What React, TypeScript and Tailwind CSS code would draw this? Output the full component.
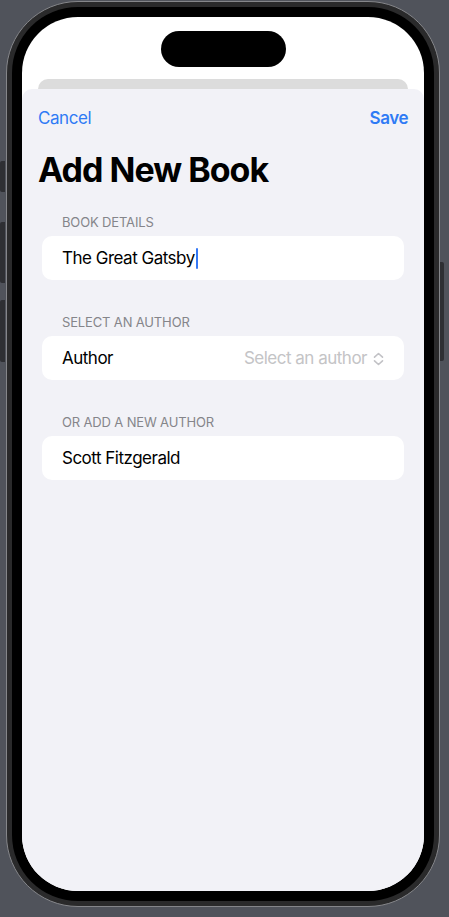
import React from "react";

const font = { fontFamily: "Inter, 'Noto Sans', 'Liberation Sans', sans-serif" };

function Chevrons() {
  return (
    <svg width="11" height="14" viewBox="0 0 11 14" fill="none" className="ml-[6px]">
      <path d="M1.5 5.2 L5.5 1.5 L9.5 5.2" stroke="#c2c2c6" strokeWidth="1.6" strokeLinecap="round" strokeLinejoin="round" />
      <path d="M1.5 8.8 L5.5 12.5 L9.5 8.8" stroke="#c2c2c6" strokeWidth="1.6" strokeLinecap="round" strokeLinejoin="round" />
    </svg>
  );
}

function SectionHeader({ children }: { children: React.ReactNode }) {
  return (
    <div className="px-[40px] h-[16px] text-[13px] leading-[16px] text-[#85858a] tracking-[-0.15px] uppercase">
      {children}
    </div>
  );
}

function Card({ children }: { children: React.ReactNode }) {
  return (
    <div className="mx-[20px] mt-[6px] h-[44px] rounded-[10px] bg-white px-[20px] pt-[1px] flex items-center text-[17px] tracking-[-0.5px] text-black">
      {children}
    </div>
  );
}

export default function App() {
  return (
    <div className="relative w-[449px] h-[917px] bg-[#50535b] overflow-hidden" style={font}>
      {/* side buttons */}
      <div className="absolute left-0 top-[161px] w-[5px] h-[31px] rounded-l-[2px] bg-[#2e2f33]" />
      <div className="absolute left-0 top-[222px] w-[5px] h-[61px] rounded-l-[2px] bg-[#2e2f33]" />
      <div className="absolute left-0 top-[300px] w-[5px] h-[62px] rounded-l-[2px] bg-[#2e2f33]" />
      <div className="absolute left-[440px] top-[262px] w-[4px] h-[99px] rounded-r-[2px] bg-[#2e2f33]" />

      {/* phone frame */}
      <div className="ml-[6px] mt-[1px] w-[434px] h-[906px] rounded-[72px] border border-[#85868a] bg-[#2a2a2b] p-[5px]">
        <div className="w-full h-full rounded-[66px] bg-black p-[10px]">
          <div className="w-[402px] h-[874px] rounded-[56px] bg-white overflow-hidden flex flex-col">
            {/* dynamic island */}
            <div className="mt-[14px] mx-auto w-[125px] h-[36px] rounded-full bg-black" />
            {/* card behind */}
            <div className="mt-[12px] mx-[16px] h-[10px] rounded-t-[10px] bg-[#dcdcdc]" />
            {/* sheet */}
            <div className="flex-1 rounded-t-[10px] bg-[#f2f2f7]">
              <div className="pt-[17px] px-[16px] flex items-center justify-between h-[40px] text-[17px] leading-[22px] tracking-[-0.45px] text-[#2f7bf5]">
                <span>Cancel</span>
                <span className="font-semibold">Save</span>
              </div>
              <h1 className="mt-[20px] px-[16px] text-[34px] leading-[41px] font-bold tracking-[-1px] text-black">
                Add New Book
              </h1>

              <div className="mt-[24px]">
                <SectionHeader>Book Details</SectionHeader>
                <Card>
                  <span>The Great Gatsby</span>
                  <span className="ml-[1px] w-[2px] h-[21px] bg-[#3478f6] rounded-full" />
                </Card>
              </div>

              <div className="mt-[34px]">
                <SectionHeader>Select an Author</SectionHeader>
                <Card>
                  <span className="flex-1">Author</span>
                  <span className="text-[#c4c4c6]">Select an author</span>
                  <Chevrons />
                </Card>
              </div>

              <div className="mt-[34px]">
                <SectionHeader>Or add a new author</SectionHeader>
                <Card>
                  <span>Scott Fitzgerald</span>
                </Card>
              </div>
            </div>
          </div>
        </div>
      </div>
    </div>
  );
}
